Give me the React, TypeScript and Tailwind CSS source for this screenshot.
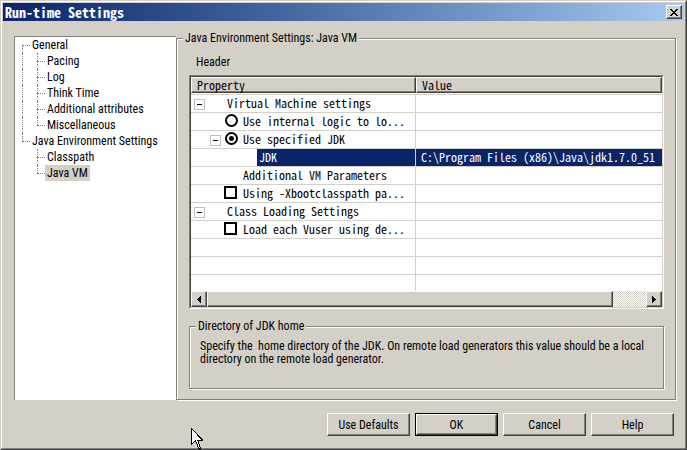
import { useState, type ReactNode } from "react";

const raised =
  "border border-t-white border-l-white border-r-[#404040] border-b-[#404040] bg-[#d4d0c8] shadow-[inset_-1px_-1px_0_#808080]";
const etched =
  "min-w-0 border border-[#808080] shadow-[1px_1px_0_#fff,inset_1px_1px_0_#fff]";
const mono = "font-['Noto_Sans_Mono_CJK_SC','Liberation_Mono',monospace]";

type Node = { label: string; child?: boolean; first?: boolean; last?: boolean; rail?: boolean };

const nodes: Node[] = [
  { label: "General", first: true },
  { label: "Pacing", child: true, rail: true },
  { label: "Log", child: true, rail: true },
  { label: "Think Time", child: true, rail: true },
  { label: "Additional attributes", child: true, rail: true },
  { label: "Miscellaneous", child: true, rail: true, last: true },
  { label: "Java Environment Settings", last: true },
  { label: "Classpath", child: true },
  { label: "Java VM", child: true, last: true },
];

function TreeRow({ node, selected, onSelect }: { node: Node; selected: boolean; onSelect: () => void }) {
  return (
    <li role="treeitem" aria-selected={selected} className="flex h-4 pl-[7px]">
      {node.child && (
        <span className={`w-[15px] shrink-0 border-[#808080] ${node.rail ? "border-l border-dotted" : ""}`} />
      )}
      <span className="flex w-2 shrink-0 flex-col">
        <span className={`h-2 border-dotted border-[#808080] ${node.first ? "" : "border-l"}`} />
        <span className={`h-2 border-t border-dotted border-[#808080] ${node.last ? "" : "border-l"}`} />
      </span>
      <button onClick={onSelect} className={`px-0.5 leading-4 whitespace-nowrap ${selected ? "bg-[#d4d0c8]" : ""}`}>
        {node.label}
      </button>
    </li>
  );
}

function Toggle({ label }: { label: string }) {
  const [open, setOpen] = useState(true);
  return (
    <button
      aria-label={label}
      aria-expanded={open}
      onClick={() => setOpen(!open)}
      className="mt-1 flex size-[11px] shrink-0 items-center justify-center border border-[#c0c0c0] bg-white"
    >
      <span className="h-px w-[5px] bg-black" />
    </button>
  );
}

function Row({ children, value, selected }: { children?: ReactNode; value?: string; selected?: boolean }) {
  return (
    <tr className="h-[18px]">
      <td className="border-r border-b border-[#d4d0c8] p-0 in-[tr:last-child]:border-b-0">
        <div className="flex h-[17px] items-start leading-4 whitespace-pre in-[tr:last-child]:h-4">{children}</div>
      </td>
      <td className={`border-b border-[#d4d0c8] p-0 pl-[5px] align-top leading-4 whitespace-pre in-[tr:last-child]:border-b-0 ${selected ? "bg-[#0a246a] bg-clip-padding text-white" : ""}`}>{value}</td>
    </tr>
  );
}

function Check({ id, label }: { id: string; label: string }) {
  return (
    <div className="flex pl-[33px]">
      <input id={id} type="checkbox" className="mt-px size-[13px] appearance-none border-2 border-black bg-white checked:bg-black" />
      <label htmlFor={id} className="pl-1.5">{label}</label>
    </div>
  );
}

const radio =
  "mt-px size-[13px] shrink-0 appearance-none rounded-full border-2 border-black bg-white checked:bg-[radial-gradient(circle,#000_2px,#fff_3px)]";

export default function App() {
  const [page, setPage] = useState("Java VM");
  return (
    <div className="relative min-h-screen border border-t-[#d4d0c8] border-r-[#404040] border-b-[#404040] border-l-[#d4d0c8] bg-[#d4d0c8] font-['Roboto_Condensed','Roboto',sans-serif] text-[12px] leading-[14px] text-black">
      <div className="flex min-h-[448px] flex-col border border-t-white border-r-[#808080] border-b-[#808080] border-l-white p-px">
        <header className="flex h-[18px] items-center justify-between bg-linear-to-r from-[#0a246a] to-[#a6caf0] pr-0.5 pl-0.5">
          <h1 className="font-['Noto_Sans_Mono_CJK_SC','Liberation_Mono',monospace] text-[14px] leading-4 font-bold text-white">Run-time Settings</h1>
          <button aria-label="Close" className={`flex h-[14px] w-4 items-center justify-center ${raised}`}>
            <svg width="8" height="7" viewBox="0 0 8 7" shapeRendering="crispEdges">
              <path d="M0 0h2v1h1v1h2V1h1V0h2v1H7v1H6v1H5v1h1v1h1v1h1v1H6V6H5V5H3v1H2v1H0V6h1V5h1V4h1V3H2V2H1V1H0z" />
            </svg>
          </button>
        </header>

        <main className="flex pt-[10px] pr-2 pl-[11px]">
          <ul role="tree" aria-label="Settings" className="mt-[5px] w-[162px] shrink-0 border-t border-l border-[#808080] bg-white">
            {nodes.map((n) => (
              <TreeRow key={n.label} node={n} selected={page === n.label} onSelect={() => setPage(n.label)} />
            ))}
          </ul>

          <fieldset className={`flex-1 pr-[11px] pb-[10px] pl-3 ${etched}`}>
            <legend className="-ml-[6px] bg-[#d4d0c8] px-0.5">Java Environment Settings: Java VM</legend>
            <p className="pt-[10px] pb-1.5 pl-[7px]">Header</p>

            <div className="border border-t-[#808080] border-r-white border-b-white border-l-[#808080]">
              <div className="border border-t-[#404040] border-r-[#d4d0c8] border-b-[#d4d0c8] border-l-[#404040] bg-white">
                <table className={`w-full table-fixed border-separate border-spacing-0 text-[12px] ${mono}`}>
                  <colgroup>
                    <col className="w-[225px]" />
                    <col />
                  </colgroup>
                  <thead>
                    <tr className="h-[18px]">
                      <th className="border-b border-[#d4d0c8] p-0 pb-px text-left font-normal">
                        <div className={`h-4 pl-[5px] leading-[14px] ${raised}`}>Property</div>
                      </th>
                      <th className="border-b border-[#d4d0c8] p-0 pb-px text-left font-normal">
                        <div className={`h-4 pl-[5px] leading-[14px] ${raised}`}>Value</div>
                      </th>
                    </tr>
                  </thead>
                  <tbody className="[&>tr:last-child]:h-4">
                    <Row>
                      <div className="flex pl-[3px]"><Toggle label="Virtual Machine settings" /><span className="pl-[22px]">Virtual Machine settings</span></div>
                    </Row>
                    <Row>
                      <div className="flex pl-[34px]">
                        <input id="internal" type="radio" name="jdk" className={radio} />
                        <label htmlFor="internal" className="pl-[5px]">Use internal logic to lo...</label>
                      </div>
                    </Row>
                    <Row>
                      <div className="flex pl-[19px]">
                        <Toggle label="Use specified JDK" />
                        <span className="w-1" />
                        <input id="specified" type="radio" name="jdk" defaultChecked className={radio} />
                        <label htmlFor="specified" className="pl-[5px]">Use specified JDK</label>
                      </div>
                    </Row>
                    <Row selected value="C:\Program Files (x86)\Java\jdk1.7.0_51">
                      <span className="ml-[66px] h-full flex-1 bg-[#0a246a] pl-0.5 text-white">JDK</span>
                    </Row>
                    <Row><span className="pl-[52px]">Additional VM Parameters</span></Row>
                    <Row><Check id="boot" label="Using -Xbootclasspath pa..." /></Row>
                    <Row>
                      <div className="flex pl-[3px]"><Toggle label="Class Loading Settings" /><span className="pl-[22px]">Class Loading Settings</span></div>
                    </Row>
                    <Row><Check id="vuser" label="Load each Vuser using de..." /></Row>
                    <Row />
                    <Row />
                    <Row />
                  </tbody>
                </table>
                <div className="flex h-4 bg-[repeating-conic-gradient(#fff_0_25%,#d4d0c8_0_50%)] bg-size-[2px_2px]">
                  <button aria-label="Scroll left" className={`flex w-4 items-center justify-center ${raised}`}>
                    <svg width="4" height="7" viewBox="0 0 4 7" shapeRendering="crispEdges"><path d="M4 0v7L0 3.5z" /></svg>
                  </button>
                  <div className={`flex-1 ${raised}`} />
                  <div className="w-[33px]" />
                  <button aria-label="Scroll right" className={`flex w-4 items-center justify-center ${raised}`}>
                    <svg width="4" height="7" viewBox="0 0 4 7" shapeRendering="crispEdges"><path d="M0 0v7l4-3.5z" /></svg>
                  </button>
                </div>
              </div>
            </div>

            <fieldset className={`mt-[10px] min-h-[70px] px-[10px] pt-[7px] ${etched}`}>
              <legend className="-ml-1 bg-[#d4d0c8] px-0.5">Directory of JDK home</legend>
              <p className="leading-[13px] whitespace-pre-wrap">{"Specify the  home directory of the JDK. On remote load generators this value should be a local\ndirectory on the remote load generator."}</p>
            </fieldset>
          </fieldset>
        </main>

        <footer className="flex justify-end gap-[5px] pt-[13px] pr-[10px]">
          <button className={`h-[23px] w-[83px] ${raised}`}>Use Defaults</button>
          <button className="h-[23px] w-[83px] border border-black">
            <span className={`flex h-full items-center justify-center ${raised}`}>OK</span>
          </button>
          <button className={`h-[23px] w-[83px] ${raised}`}>Cancel</button>
          <button className={`h-[23px] w-[83px] ${raised}`}>Help</button>
        </footer>
      </div>

      <svg className="pointer-events-none absolute top-[427px] left-[190px]" width="12" height="21" viewBox="0 0 12 21" shapeRendering="crispEdges">
        <path d="M.5.5v16l4-4 3 7.500h2l-3-8h5z" fill="#fff" stroke="#000" />
      </svg>
    </div>
  );
}
